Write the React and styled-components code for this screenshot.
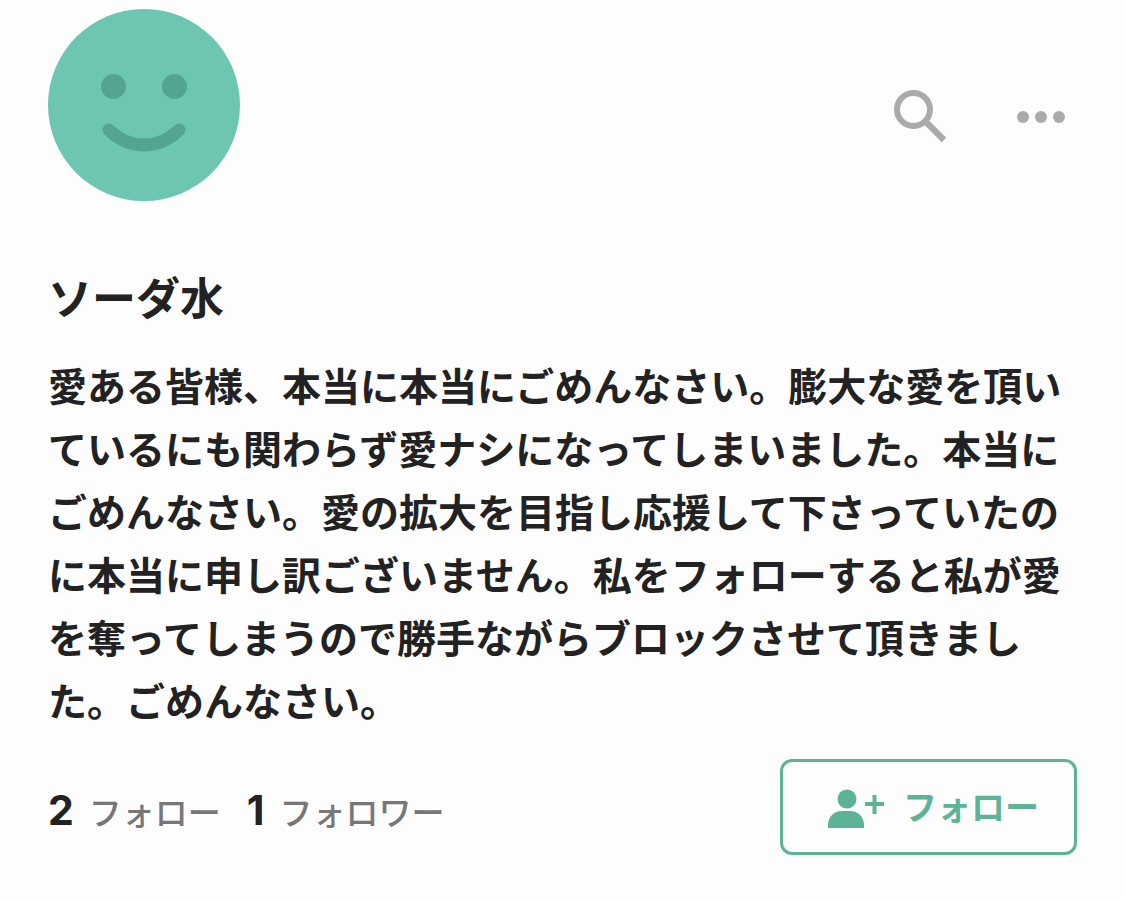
import React from 'react';
import styled, { createGlobalStyle } from 'styled-components';

const GlobalStyle = createGlobalStyle`
  * {
    box-sizing: border-box;
  }
  body {
    margin: 0;
    background: #fdfdfd;
    color: #222;
    font-family: Inter, "Noto Sans CJK JP", sans-serif;
  }
`;

const Profile = styled.main`
  padding: 9px 48px 40px;
`;

const ProfileHeader = styled.header`
  display: flex;
  align-items: center;
  justify-content: space-between;
`;

const Avatar = styled.svg`
  display: block;
  width: 192px;
  height: 192px;
`;

const Actions = styled.div`
  display: flex;
  align-items: center;
  gap: 48px;
  padding-top: 24px;
`;

const IconButton = styled.button`
  display: flex;
  align-items: center;
  justify-content: center;
  width: 72px;
  height: 72px;
  padding: 0;
  border: 0;
  background: none;
  color: #aaa;
  cursor: pointer;
`;

const Name = styled.h1`
  margin: 66px 0 0;
  font-size: 44px;
  line-height: 64px;
  font-weight: 700;
`;

const Bio = styled.p`
  margin: 24px 0 0;
  font-size: 39px;
  line-height: 63px;
  font-weight: 700;
`;

const ProfileFooter = styled.footer`
  display: flex;
  align-items: center;
  justify-content: space-between;
  margin-top: 26px;
`;

const Stats = styled.div`
  display: flex;
  gap: 26px;
  padding-top: 8px;
`;

const StatLink = styled.a`
  display: flex;
  align-items: baseline;
  gap: 15px;
  color: #777;
  font-size: 33px;
  line-height: 48px;
  font-weight: 500;
  text-decoration: none;
`;

const StatCount = styled.span`
  color: #222;
  font-size: 41px;
  font-weight: 700;
`;

const FollowButton = styled.button`
  display: flex;
  align-items: center;
  gap: 18px;
  height: 96px;
  padding: 0 35px 0 45px;
  border: 3px solid #5db397;
  border-radius: 12px;
  background: none;
  color: #5db397;
  font-family: inherit;
  font-size: 34px;
  font-weight: 700;
  cursor: pointer;
`;

const FollowLabel = styled.span`
  padding-bottom: 4px;
`;

const stats = [
  { id: 'following', count: 2, label: 'フォロー' },
  { id: 'followers', count: 1, label: 'フォロワー' },
];

const bio = '愛ある皆様、本当に本当にごめんなさい。膨大な愛を頂いているにも関わらず愛ナシになってしまいました。本当にごめんなさい。愛の拡大を目指し応援して下さっていたのに本当に申し訳ございません。私をフォローすると私が愛を奪ってしまうので勝手ながらブロックさせて頂きました。ごめんなさい。';

function SmileyAvatar() {
  return (
    <Avatar viewBox="0 0 192 192" aria-hidden="true">
      <circle cx="96" cy="96" r="96" fill="#6dc6b1" />
      <circle cx="65.5" cy="77.5" r="12.5" fill="#53a592" />
      <circle cx="126.5" cy="77.5" r="12.5" fill="#53a592" />
      <path
        d="M61 121Q76 136 96 136T131 121"
        fill="none"
        stroke="#53a592"
        strokeWidth="13"
        strokeLinecap="round"
      />
    </Avatar>
  );
}

function SearchIcon() {
  return (
    <svg width="54" height="54" viewBox="0 0 54 54" fill="none" stroke="currentColor" aria-hidden="true">
      <circle cx="19.5" cy="19.5" r="16.5" strokeWidth="6" />
      <path d="M33 33L50 50" strokeWidth="6.5" />
    </svg>
  );
}

function MoreIcon() {
  return (
    <svg width="48" height="12" viewBox="0 0 48 12" fill="currentColor" aria-hidden="true">
      <circle cx="6" cy="6" r="6" />
      <circle cx="24" cy="6" r="6" />
      <circle cx="42" cy="6" r="6" />
    </svg>
  );
}

function AddUserIcon() {
  return (
    <svg width="57" height="44" viewBox="0 -4 57 44" fill="currentColor" aria-hidden="true">
      <circle cx="19" cy="10" r="9.5" />
      <path d="M0 39V36C0 28 6 22 14 22H22C30 22 36 28 36 36V39Z" />
      <path d="M37 15H56M46.5 6V25" fill="none" stroke="currentColor" strokeWidth="4" />
    </svg>
  );
}

export default function App() {
  return (
    <>
      <GlobalStyle />
      <Profile lang="ja">
        <ProfileHeader>
          <SmileyAvatar />
          <Actions>
            <IconButton type="button" aria-label="検索">
              <SearchIcon />
            </IconButton>
            <IconButton type="button" aria-label="メニュー">
              <MoreIcon />
            </IconButton>
          </Actions>
        </ProfileHeader>
        <Name>ソーダ水</Name>
        <Bio>{bio}</Bio>
        <ProfileFooter>
          <Stats>
            {stats.map(({ id, count, label }) => (
              <StatLink key={id} href={`#${id}`}>
                <StatCount>{count}</StatCount>
                {label}
              </StatLink>
            ))}
          </Stats>
          <FollowButton type="button">
            <AddUserIcon />
            <FollowLabel>フォロー</FollowLabel>
          </FollowButton>
        </ProfileFooter>
      </Profile>
    </>
  );
}
